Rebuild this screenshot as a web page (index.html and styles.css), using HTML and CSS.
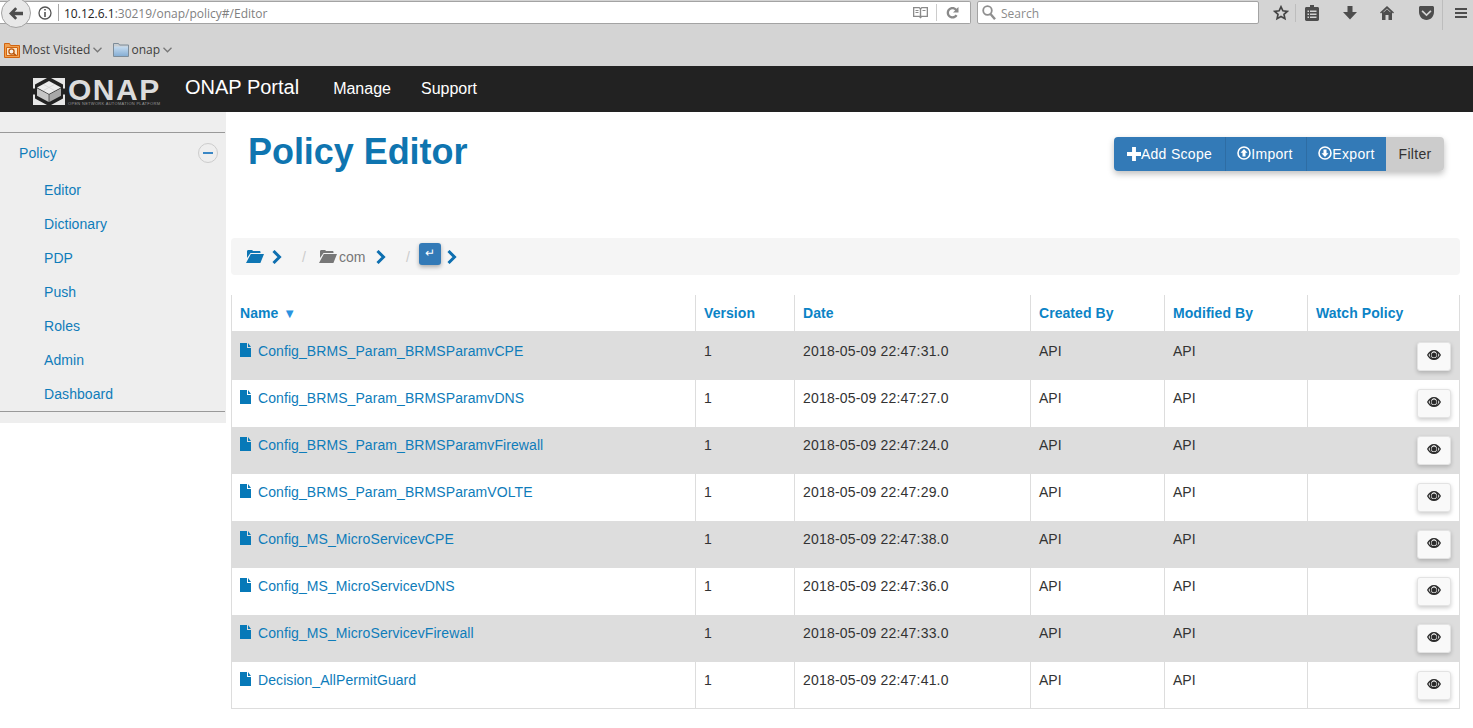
FILE: index.html
```html
<!DOCTYPE html>
<html>

  <head>
    <title>ONAP Portal - Policy Editor</title>
    <link rel="stylesheet" href="styles.css">
  </head>

  <body>
    <svg class="defs">
      <symbol id="i-file" viewBox="0 0 12 14"><path d="M0 0h7v5h4v9H0zM8 0l3 4H8z"/></symbol>
      <symbol id="i-eye" viewBox="0 0 14 10"><path fill-rule="evenodd" d="M7 0c3 0 5.600 2 7 5-1.400 3-4 5-7 5S1.400 8 0 5c1.400-3 4-5 7-5zM3 3.200C2.400 3.700 1.900 4.300 1.500 5c1.200 2 3.200 3.800 5.500 3.800S11.300 7 12.500 5c-.4-.7-.9-1.300-1.500-1.800.2.500.3 1.100.3 1.800 0 2.300-1.900 3.700-4.300 3.700S2.700 7.300 2.700 5c0-.7.100-1.300.3-1.800zM7 1.300C5.600 1.300 4 2.500 4 5s1.400 3 3 3 3-.5 3-3-1.600-3.700-3-3.700zM7 2.500c1.400 0 2.500 1.100 2.500 2.500S8.400 7.500 7 7.500 4.500 6.400 4.500 5 5.600 2.500 7 2.500z"/></symbol>
      <symbol id="i-chev" viewBox="0 0 11 14"><path fill="none" stroke-width="3" d="M2.500 1l6 6-6 6"/></symbol>
      <symbol id="i-open" viewBox="0 0 18 13"><path d="M1 3V1.500C1 .7 1.600 0 2.300 0h3.400c.6 0 1 .4 1.300 1h6.500c.7 0 1 .5 1 1.200V3H4.500L1 8zM4.800 4H18l-3.600 9H0z"/></symbol>
    </svg>

    <div class="browser">
      <div class="toolbar">
        <div class="urlbar">
          <div class="back">
            <svg width="14" height="13" viewBox="0 0 18 16"><path fill="#4d4d4d" d="M8 0l2.500 2.300L7.300 5.600H18v4.800H7.300l3.200 3.300L8 16 0 8z"/></svg>
          </div>
          <svg class="info" width="14" height="14" viewBox="0 0 14 14"><circle cx="7" cy="7" r="6" fill="none" stroke="#555" stroke-width="1.300"/><path fill="#555" d="M6.200 3h1.600v1.600H6.200zM6.200 6h1.600v5H6.200z"/></svg>
          <span class="sep"></span>
          <span class="url"><b>10.12.6.1</b>:30219/onap/policy#/Editor</span>
          <svg class="reader" width="15" height="13" viewBox="0 0 15 13"><path fill="#8a8a8a" fill-rule="evenodd" d="M0 1h6.500L7.500 2l1-1H15v10H9l-1.500 1.500L6 11H0zM1.300 2.300v7.400h5.500V3.300l-.8-1zM8.200 3.300v6.400h5.500V2.300H9zM2.500 4H5.500v1H2.500zM2.500 6H5.500v1H2.500zM9.500 4h3v1h-3z"/></svg>
          <span class="sep sep-r"></span>
          <svg class="reload" width="13" height="13" viewBox="0 0 13 13"><path fill="#8a8a8a" d="M6.500 1c1.600 0 3 .7 4 1.700L12.500 1v5.500H7l2.100-2.100C8.400 3.700 7.500 3.300 6.500 3.300 4.500 3.300 3 4.800 3 6.800s1.500 3.500 3.500 3.500c1.300 0 2.400-.7 3-1.700l2 1.100C10.500 11.500 8.600 12.600 6.500 12.600 3.200 12.600.7 10 .7 6.800S3.200 1 6.500 1z"/></svg>
        </div>
        <div class="searchbar">
          <svg width="14" height="15" viewBox="0 0 14 15"><circle cx="5.500" cy="5.500" r="4.300" fill="none" stroke="#8f8f8f" stroke-width="1.800"/><path stroke="#8f8f8f" stroke-width="2.400" d="M8.500 9l4.500 5.200"/></svg>
          <span>Search</span>
        </div>
        <div class="tools">
          <svg class="t-star" width="16" height="16" viewBox="0 0 16 16"><path fill="none" stroke="#444" stroke-width="1.700" d="M8 1.800l1.900 4 4.400.5-3.300 3 .9 4.400L8 11.500l-3.900 2.200.9-4.400-3.300-3 4.400-.5z"/></svg>
          <span class="t-div"></span>
          <svg class="t-clip" width="14" height="16" viewBox="0 0 14 16"><path fill="#4d4d4d" fill-rule="evenodd" d="M5 0h4v2h3.500c.8 0 1.500.6 1.500 1.400v11.200c0 .8-.7 1.400-1.500 1.400h-11C.7 16 0 15.400 0 14.600V3.400C0 2.600.7 2 1.500 2H5zM2.500 5.500v1.500h1.500V5.500zM5 5.500v1.500h6.500V5.500zM2.500 8.500V10h1.500V8.500zM5 8.500V10h6.500V8.500zM2.500 11.500V13h1.500v-1.500zM5 11.500V13h6.500v-1.500z"/></svg>
          <svg class="t-down" width="14" height="14" viewBox="0 0 14 14"><path fill="#4d4d4d" d="M4.500 0h5v6H14l-7 7.500L0 6h4.500z"/></svg>
          <svg class="t-home" width="14" height="14" viewBox="0 0 14 14"><path fill="#4d4d4d" fill-rule="evenodd" d="M7 0l7 6.500-1 1-1-.9V14H8.500V9h-3v5H2V6.600l-1 .9-1-1zM7 2.400L3.500 5.700v.8L7 3.200l3.500 3.300v-.8z"/></svg>
          <svg class="t-pocket" width="15" height="14" viewBox="0 0 15 14"><path fill="#4d4d4d" fill-rule="evenodd" d="M1.500 0h12c.8 0 1.500.7 1.500 1.500V6c0 4.400-3.400 8-7.500 8S0 10.400 0 6V1.500C0 .7.700 0 1.500 0zM3.700 4.300L2.500 5.500l5 4.800 5-4.800-1.200-1.200-3.800 3.600z"/></svg>
          <span class="t-div t-div2"></span>
          <span class="burger"><i></i><i></i><i></i></span>
        </div>
      </div>
      <div class="bookmarks">
        <span class="mark">
          <svg width="16" height="16" viewBox="0 0 16 16"><path fill="#f0a050" stroke="#d2640f" d="M.5 1.500h5l1 2h9v12H.5z"/><path fill="#fbe3c4" stroke="#d2640f" d="M2.500 5.500h11v8h-11z"/><circle cx="7.500" cy="9.500" r="2.600" fill="#f7f0e6" stroke="#b9560d" stroke-width="1.300"/><path stroke="#b9560d" stroke-width="1.600" d="M9.300 11.300l2.700 2"/></svg>
          <span>Most Visited</span>
          <svg class="caret" width="9" height="6" viewBox="0 0 9 6"><path fill="none" stroke="#777" stroke-width="1.300" d="M.5.8l4 4 4-4"/></svg>
        </span>
        <span class="mark mark-onap">
          <svg width="16" height="14" viewBox="0 0 16 14"><defs><linearGradient id="fold" x1="0" y1="0" x2="0" y2="1"><stop offset="0" stop-color="#c6dcf0"/><stop offset="1" stop-color="#86aed4"/></linearGradient></defs><path fill="#c9cdd0" stroke="#7d8c99" d="M.5.500h5l1 1.500h9v11.500H.5z"/><path fill="url(#fold)" d="M1 3.500h14V13H1z"/></svg>
          <span>onap</span>
          <svg class="caret" width="9" height="6" viewBox="0 0 9 6"><path fill="none" stroke="#777" stroke-width="1.300" d="M.5.8l4 4 4-4"/></svg>
        </span>
      </div>
    </div>

    <nav class="navbar">
      <div class="logo">
        <svg width="32" height="27" viewBox="0 0 32 27">
          <path fill="#e6e6e6" d="M0 0h14L2 6.500V10.500H0zM32 0H18l12 6.500V10.500h2zM0 27h14L2 20.500V16.500H0zM32 27H18l12-6.500V16.500h2z"/>
          <path fill="#ececec" d="M16 3l12 6.500L16 16 4 9.500z"/>
          <path fill="#c6c6c6" d="M4 10.200l11.700 6.300V24L4 17.700z"/>
          <path fill="#a8a8a8" d="M28 10.200l-11.700 6.300V24L28 17.700z"/>
          <path fill="none" stroke="#d2d2d2" stroke-width=".8" d="M10 6.200l12 6.500M22 6.200l-12 6.500"/>
        </svg>
        <div class="logo-text">
          <span class="logo-name">ONAP</span>
          <span class="logo-sub">OPEN NETWORK AUTOMATION PLATFORM</span>
        </div>
      </div>
      <a class="brand">ONAP Portal</a>
      <a class="nav-link">Manage</a>
      <a class="nav-link">Support</a>
    </nav>

    <div class="page">
      <aside class="sidebar">
        <div class="side-list">
          <div class="side-head">
            <span>Policy</span>
            <span class="collapse"><i></i></span>
          </div>
          <a class="side-item">Editor</a>
          <a class="side-item">Dictionary</a>
          <a class="side-item">PDP</a>
          <a class="side-item">Push</a>
          <a class="side-item">Roles</a>
          <a class="side-item">Admin</a>
          <a class="side-item">Dashboard</a>
        </div>
      </aside>

      <main class="main">
        <div class="title-row">
          <h1>Policy Editor</h1>
          <div class="btn-group">
            <button class="btn btn-add">
              <svg width="14" height="14" viewBox="0 0 13 13"><path fill="#fff" d="M4.700 0h3.600v4.700H13v3.600H8.300V13H4.700V8.300H0V4.700h4.700z"/></svg>Add Scope
            </button>
            <button class="btn btn-imp">
              <svg width="14" height="14" viewBox="0 0 14 14"><circle cx="7" cy="7" r="6" fill="none" stroke="#fff" stroke-width="1.600"/><path fill="#fff" d="M7 3l3.500 3.800H8.500V10.500h-3V6.800H3.500z"/></svg>Import
            </button>
            <button class="btn btn-exp">
              <svg width="14" height="14" viewBox="0 0 14 14"><circle cx="7" cy="7" r="6" fill="none" stroke="#fff" stroke-width="1.600"/><path fill="#fff" d="M7 11l3.500-3.800H8.500V3.500h-3v3.700H3.500z"/></svg>Export
            </button>
            <button class="btn btn-filter">Filter</button>
          </div>
        </div>

        <div class="crumbs">
          <svg class="c-open" width="18" height="13"><use href="#i-open"/></svg>
          <svg class="c-chev" width="11" height="14"><use href="#i-chev"/></svg>
          <span class="c-slash">/</span>
          <svg class="c-open c-gray" width="18" height="13"><use href="#i-open"/></svg>
          <span class="c-name">com</span>
          <svg class="c-chev" width="11" height="14"><use href="#i-chev"/></svg>
          <span class="c-slash">/</span>
          <span class="c-enter">↵</span>
          <svg class="c-chev c-last" width="11" height="14"><use href="#i-chev"/></svg>
        </div>

        <table class="policy-table">
          <colgroup>
            <col class="col-name"><col class="col-ver"><col class="col-date"><col class="col-by"><col class="col-mod"><col>
          </colgroup>
          <thead>
            <tr>
              <th>Name <span class="sort">▼</span></th>
              <th>Version</th>
              <th>Date</th>
              <th>Created By</th>
              <th>Modified By</th>
              <th>Watch Policy</th>
            </tr>
          </thead>
          <tbody id="rows"></tbody>
        </table>
      </main>
    </div>

    <script>
      const policies = [
        ['Config_BRMS_Param_BRMSParamvCPE', '2018-05-09 22:47:31.0'],
        ['Config_BRMS_Param_BRMSParamvDNS', '2018-05-09 22:47:27.0'],
        ['Config_BRMS_Param_BRMSParamvFirewall', '2018-05-09 22:47:24.0'],
        ['Config_BRMS_Param_BRMSParamVOLTE', '2018-05-09 22:47:29.0'],
        ['Config_MS_MicroServicevCPE', '2018-05-09 22:47:38.0'],
        ['Config_MS_MicroServicevDNS', '2018-05-09 22:47:36.0'],
        ['Config_MS_MicroServicevFirewall', '2018-05-09 22:47:33.0'],
        ['Decision_AllPermitGuard', '2018-05-09 22:47:41.0']
      ];

      document.getElementById('rows').innerHTML = policies.map(p => `
        <tr>
          <td><a class="file"><svg width="12" height="14"><use href="#i-file"/></svg>${p[0]}</a></td>
          <td>1</td>
          <td class="date">${p[1]}</td>
          <td>API</td>
          <td>API</td>
          <td class="watch"><button class="eye"><svg width="14" height="10"><use href="#i-eye"/></svg></button></td>
        </tr>`).join('');
    </script>
  </body>

</html>
```

FILE: styles.css
```css
html, body {
  margin: 0;
  padding: 0;
  background-color: #fff;
}

body {
  font-family: "Liberation Sans", Arial, sans-serif;
  font-size: 14px;
  line-height: 20px;
  color: #333;
  height: 728px;
  overflow: hidden;
}

.defs {
  display: none;
}

a {
  color: #0e7cba;
  text-decoration: none;
}

/* browser chrome */

.browser {
  height: 66px;
  background-color: #d4d4d4;
  font-family: "Open Sans", "Noto Sans", sans-serif;
  font-size: 12px;
}

.toolbar {
  display: flex;
  align-items: flex-start;
  height: 36px;
  padding-top: 1px;
  box-sizing: border-box;
}

.urlbar {
  position: relative;
  display: flex;
  align-items: center;
  width: 971px;
  height: 23px;
  box-sizing: border-box;
  background-color: #fff;
  border: 1px solid #a3a3a3;
  border-left: 0;
  border-radius: 0 2px 2px 0;
  padding-left: 38px;
  flex: none;
}

.back {
  position: absolute;
  left: 1px;
  top: -4px;
  width: 30px;
  height: 30px;
  box-sizing: border-box;
  display: flex;
  align-items: center;
  justify-content: center;
  background-color: #e8e8e8;
  border: 1px solid #a3a3a3;
  border-radius: 50%;
}

.info {
  flex: none;
}

.sep {
  width: 1px;
  height: 17px;
  background-color: #a8a8a8;
  margin: 0 5px 0 6px;
  flex: none;
}

.url {
  color: #7f7f7f;
  font-size: 12px;
  flex: 1;
  padding-top: 2px;
}

.url b {
  color: #222;
  font-weight: 400;
}

.sep-r {
  margin: 0 9px 0 8px;
  background-color: #ccc;
}

.reload {
  margin-right: 11px;
}

.searchbar {
  display: flex;
  align-items: center;
  gap: 5px;
  width: 282px;
  height: 23px;
  box-sizing: border-box;
  margin-left: 6px;
  padding-left: 4px;
  background-color: #fff;
  border: 1px solid #a3a3a3;
  border-radius: 2px;
  color: #8b8b8b;
  flex: none;
}

.searchbar span {
  padding-top: 2px;
}

.tools {
  display: flex;
  align-items: center;
  height: 23px;
  flex: 1;
  padding-left: 14px;
}

.t-div {
  width: 1px;
  height: 18px;
  background-color: #bdbdbd;
  margin: 0 9px 0 6px;
}

.t-clip { margin-right: 24px; }
.t-down { margin-right: 23px; }
.t-home { margin-right: 25px; }
.t-pocket { margin-right: 8px; }

.t-div2 {
  height: 30px;
  margin: 4px 12px 0 0;
}

.burger {
  display: flex;
  flex-direction: column;
  gap: 2px;
  width: 12px;
}

.burger i {
  display: block;
  height: 2px;
  background-color: #4d4d4d;
}

.bookmarks {
  display: flex;
  align-items: center;
  height: 28px;
  padding-left: 4px;
  color: #3d3d3d;
}

.mark {
  display: flex;
  align-items: center;
  gap: 2px;
}

.mark .caret {
  margin-left: 1px;
}

.mark-onap {
  margin-left: 11px;
}

/* top nav */

.navbar {
  display: flex;
  align-items: center;
  height: 46px;
  background-color: #222;
  padding-left: 33px;
  color: #fff;
}

.logo {
  display: flex;
  gap: 3px;
  width: 152px;
  margin-top: 5px;
  flex: none;
}

.logo-text {
  display: flex;
  flex-direction: column;
  color: #dcdcdc;
}

.logo-name {
  font-size: 30px;
  font-weight: 700;
  line-height: 24px;
  letter-spacing: 1.500px;
}

.logo-sub {
  font-size: 4px;
  line-height: 4px;
  letter-spacing: .3px;
  color: #999;
  white-space: nowrap;
}

.brand {
  color: #fff;
  font-size: 20px;
  margin: -5px 34px 0 0;
}

.nav-link {
  color: #fff;
  font-size: 16px;
  margin-right: 30px;
}

/* sidebar and page */

.page {
  display: flex;
  align-items: flex-start;
}

.sidebar {
  width: 226px;
  height: 311px;
  box-sizing: border-box;
  flex: none;
  background-color: #eee;
  padding: 20px 1px 0 0;
}

.side-list {
  border-top: 1px solid #999;
  border-bottom: 1px solid #999;
  letter-spacing: .08px;
}

.side-head {
  display: flex;
  align-items: center;
  justify-content: space-between;
  height: 40px;
  padding: 0 7px 0 19px;
  color: #0e7cba;
}

.collapse {
  display: flex;
  align-items: center;
  justify-content: center;
  width: 20px;
  height: 20px;
  box-sizing: border-box;
  border: 1px solid #ccc;
  border-radius: 50%;
}

.collapse i {
  width: 10px;
  height: 2px;
  background-color: #3a87c5;
}

.side-item {
  display: block;
  height: 34px;
  line-height: 34px;
  padding-left: 44px;
}

.main {
  flex: 1;
  min-width: 0;
  padding: 0 13px 0 5px;
}

.title-row {
  display: flex;
  justify-content: space-between;
  align-items: flex-start;
  height: 126px;
  padding: 0 16px 0 17px;
}

h1 {
  margin: 18px 0 0;
  color: #0f75b0;
  font-size: 36px;
  line-height: 44px;
  font-weight: 700;
  letter-spacing: -.05px;
}

.btn-group {
  display: flex;
  margin-top: 25px;
  height: 34px;
  border-radius: 4px;
  box-shadow: 0 3px 6px rgba(0, 0, 0, .25);
}

.btn {
  display: flex;
  align-items: center;
  justify-content: center;
  font-family: inherit;
  font-size: 14px;
  letter-spacing: .3px;
  color: #fff;
  background-color: #337ab7;
  border: 0;
  border-left: 1px solid #2e6da4;
  padding: 0;
}

.btn-add { width: 111px; border-left: 0; border-radius: 4px 0 0 4px; }
.btn-imp { width: 81px; padding-right: 2px; }
.btn-exp { width: 80px; }
.btn-filter { width: 58px; color: #333; background-color: #ccc; border-left: 0; border-radius: 0 4px 4px 0; }

.btn-imp svg, .btn-exp svg {
  margin-bottom: 2px;
}

/* breadcrumb */

.crumbs {
  display: flex;
  align-items: center;
  height: 37px;
  padding-left: 15px;
  background-color: #f5f5f5;
  border-radius: 4px;
  margin-bottom: 20px;
  color: #777;
}

.c-open { fill: #0e76b4; }
.c-gray { fill: #777; }

.c-chev {
  stroke: #0e6fb0;
  margin-left: 7px;
}

.c-slash {
  color: #ccc;
  margin: 0 13px 0 20px;
}

.c-name {
  margin: 0 2.600px 0 2px;
  color: #777;
}

.c-enter {
  width: 22px;
  height: 22px;
  line-height: 20px;
  margin: -5px 0 0 -4px;
  text-align: center;
  font-size: 12px;
  color: #fff;
  background-color: #337ab7;
  border-radius: 3px;
  box-shadow: 0 2px 4px rgba(0, 0, 0, .3);
}

.c-last {
  margin-left: 5px;
}

/* table */

.policy-table {
  width: 1229px;
  table-layout: fixed;
  border-collapse: separate;
  border-spacing: 0;
  border: 1px solid #ddd;
  border-top: 0;
}

.col-name { width: 463px; }
.col-ver { width: 99px; }
.col-date { width: 236px; }
.col-by { width: 134px; }
.col-mod { width: 143px; }

.policy-table th {
  height: 38px;
  box-sizing: border-box;
  padding: 8px 8px 0;
  vertical-align: top;
  text-align: left;
  font-weight: 700;
  color: #0b83c6;
  letter-spacing: .06px;
  border-left: 1px solid #ddd;
  border-bottom: 2px solid #ddd;
}

.policy-table th:first-child,
.policy-table td:first-child {
  border-left: 0;
}

.sort {
  margin-left: 1px;
  font-size: 13px;
  color: #2a93e0;
}

.policy-table td {
  height: 47px;
  box-sizing: border-box;
  padding: 8px 8px 0;
  vertical-align: top;
  border-left: 1px solid #ddd;
}

.policy-table tbody tr:last-child td {
  height: 46px;
}

.policy-table tbody tr:nth-child(odd) td {
  background-color: #ddd;
}

.policy-table td.date {
  letter-spacing: .19px;
}

.file {
  letter-spacing: .08px;
}

.file svg {
  fill: #0779b8;
  margin: 0 6px 0 0;
  vertical-align: -1px;
}

.policy-table td.watch {
  padding: 9px 8px 0 0;
}

.eye {
  display: block;
  width: 34px;
  height: 29px;
  margin-left: auto;
  padding: 0 0 3px;
  background-color: #f9f9f9;
  border: 1px solid #e3e3e3;
  border-radius: 3px;
  box-shadow: 0 2px 4px rgba(0, 0, 0, .2);
}

.eye svg {
  fill: #2b2b2b;
  display: block;
  margin: 0 auto;
}
```
